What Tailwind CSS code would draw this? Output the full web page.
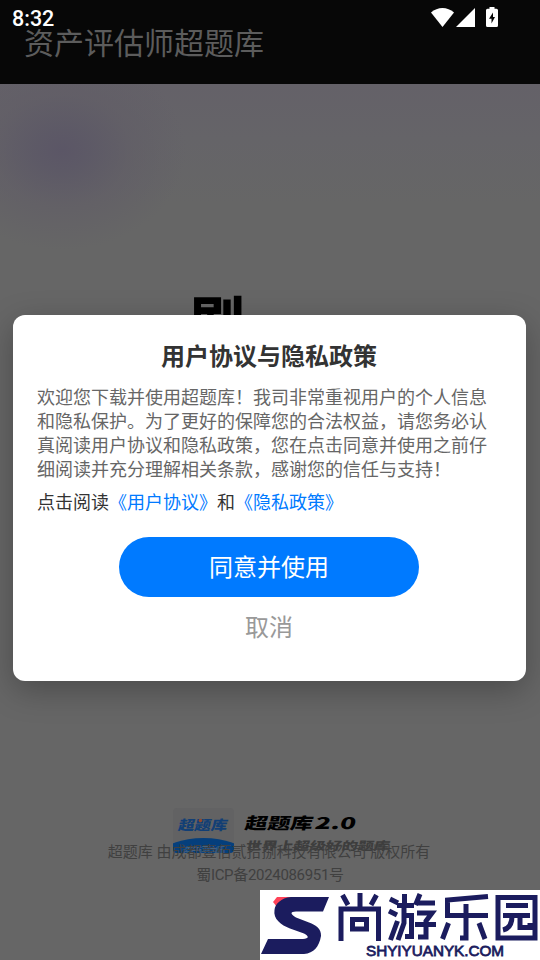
<!DOCTYPE html>
<html lang="zh-CN">
<head>
<meta charset="utf-8">
<title>资产评估师超题库</title>
<script src="https://cdn.jsdelivr.net/npm/@tailwindcss/browser@4"></script>
</head>
<body class="bg-[#666] font-[Roboto,'Noto_Sans_CJK_SC',sans-serif]">
<div class="relative flex h-[960px] w-[540px] flex-col overflow-hidden bg-[#666666]">
  <header class="flex h-[84px] shrink-0 items-center bg-[#070707] px-6 pt-[3px]">
    <h1 class="text-[30px] leading-[40px] text-[#5c5c5c]">资产评估师超题库</h1>
  </header>

  <main class="flex flex-1 flex-col items-center bg-[radial-gradient(ellipse_124px_100px_at_62px_66px,#5b5666_0%,#5c5866e0_22%,#605c6690_55%,#66666600_100%),linear-gradient(180deg,#646168_0px,#656468_55px,#666666_120px)]">
    <div class="mt-[207px] mr-[106px] h-[64px] scale-x-105 text-[52px] leading-[64px] font-black text-black">刷</div>
    <footer class="relative z-10 mt-auto mb-[73px] flex flex-col items-center text-[15px] leading-[23px] text-[#404040]">
      <p class="mr-[2px] whitespace-pre">超题库 由成都壹佰贰拾捌科技有限公司 版权所有</p>
      <p class="tracking-[-0.32px]">蜀ICP备2024086951号</p>
    </footer>
  </main>

  <!-- App brand strip that overlaps the copyright line -->
  <svg class="absolute top-[800px] left-[165px]" width="240" height="62" viewBox="0 0 240 62" font-family="'Noto Sans CJK SC',sans-serif" font-weight="900">
    <clipPath id="tile"><rect x="8" y="8" width="61" height="45" rx="4"/></clipPath>
    <g clip-path="url(#tile)">
      <rect x="8" y="8" width="61" height="45" fill="#626263"/>
      <ellipse cx="38.500" cy="53" rx="40" ry="15" fill="#053f7c"/>
      <text x="17" y="55" font-size="10" font-weight="500" textLength="43" fill="#47627f">资产评估师</text>
    </g>
    <text transform="translate(12.500 29.500) skewX(-12)" font-size="13.500" textLength="49" lengthAdjust="spacingAndGlyphs" fill="#123f75">超题库</text>
    <circle cx="35.500" cy="20.500" r="1.800" fill="#94482b"/>
    <g fill="#000">
      <text transform="translate(79 29) skewX(-12)" font-size="16" textLength="68" lengthAdjust="spacingAndGlyphs">超题库</text>
      <text transform="translate(149 28.500) skewX(-12)" font-size="16" textLength="41" lengthAdjust="spacingAndGlyphs">2.0</text>
    </g>
    <text transform="translate(80 50) skewX(-12)" font-size="11.500" textLength="144" lengthAdjust="spacingAndGlyphs" fill="#3d3d3d">世界上超级好的题库</text>
  </svg>

  <!-- Agreement dialog -->
  <section class="absolute top-[315px] left-[13px] flex h-[366px] w-[513px] flex-col rounded-[12px] bg-white pt-[25px] pr-[25px] pl-6 shadow-[0_9px_32px_rgba(0,0,0,0.27)]">
    <h2 class="text-center text-[24px] leading-[34px] font-bold text-[#333]">用户协议与隐私政策</h2>
    <div class="mt-[12px] text-[18px] leading-[24px] whitespace-nowrap text-[#666]">
      <p>欢迎您下载并使用超题库！我司非常重视用户的个人信息</p>
      <p>和隐私保护。为了更好的保障您的合法权益，请您务必认</p>
      <p>真阅读用户协议和隐私政策，您在点击同意并使用之前仔</p>
      <p>细阅读并充分理解相关条款，感谢您的信任与支持！</p>
    </div>
    <p class="mt-[9px] text-[18px] leading-[24px] whitespace-nowrap text-[#333]">点击阅读<a class="text-[#007aff]">《用户协议》</a>和<a class="text-[#007aff]">《隐私政策》</a></p>
    <button class="mt-[22px] h-[60px] w-[300px] self-center rounded-full bg-[#007aff] pt-[2px] text-[24px] text-white">同意并使用</button>
    <button class="h-[60px] w-[300px] self-center pt-[2px] text-[24px] text-[#999]">取消</button>
  </section>

  <!-- Status bar -->
  <div class="absolute inset-x-0 top-0 flex h-9 items-center justify-between pl-3 text-white">
    <span class="pt-[2px] text-[21.500px] leading-[36px] font-medium">8:32</span>
    <svg class="mr-[40px]" width="70" height="36" viewBox="430 0 70 36" fill="#fff">
      <path d="M431 12.600C437.500 6.600 447.500 6.600 454 12.600L442.500 27z"/>
      <path d="M475 8V27H456z"/>
      <path fill-rule="evenodd" d="M489.500 7H494.500V8.800H496.500Q498 8.800 498 10.300V25.500Q498 27 496.500 27H487.500Q486 27 486 25.500V10.300Q486 8.800 487.500 8.800H489.500ZM493 12.500L489 18.800H491.500V23.500L495 17H493Z"/>
    </svg>
  </div>

  <!-- Site badge -->
  <svg class="absolute top-[890px] left-[260px]" width="280" height="70" viewBox="0 0 280 70">
    <rect width="280" height="70" fill="#fff"/>
    <path d="M13 12L17 7H34L17 17Z" fill="#ff4258"/>
    <path d="M69 7H31C21 8 15 14 14.500 20C13 29 21 35 30 38.500L44 43.500Q52 48 43 49H8L1 64H44C54 63 59 57 61 46C61.500 39 56 35 49 32.500L36 27.500Q27 22 36 21.500H63Z" fill="#1b1c5e"/>
    <g fill="none" stroke="#1b1c5e" stroke-width="5">
      <path d="M100 3V18M82.500 5L88 15M116.500 5L111 15M81 51V19H118.500V51M92.500 29.500H106.500V39H92.500Z"/>
      <path d="M130 9L138 13M129 21L137 25M137.500 31L130.500 50M137 15.500H154M144.500 4V15M144 17V33L138 50M144 25.500H151.500V46.500H145M160 4L155.500 15M157 13H175M157 23H172L166 31V47H158M155 34.500H176"/>
      <path d="M228 6.500L187.500 10V25.500H228M206 14V48H200M188.500 33L182.500 49M219 33L225 49"/>
      <path d="M238 7.500H275V48H238ZM246 15.500H268M243 25.500H270M252 26Q252 38 243 40M260 26V37.500H270V33"/>
    </g>
    <text x="106" y="66" font-family="'Liberation Sans',sans-serif" font-size="15.500" stroke="#1b1c5e" stroke-width=".8" textLength="138" lengthAdjust="spacingAndGlyphs" fill="#1b1c5e">SHYIYUANYK.COM</text>
  </svg>
</div>
</body>
</html>
